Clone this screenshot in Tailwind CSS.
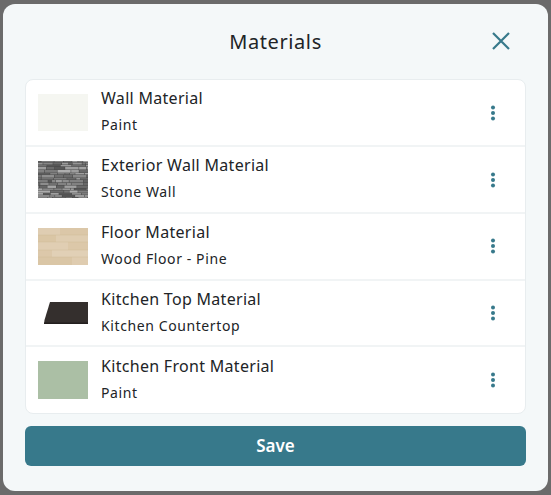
<!DOCTYPE html>
<html lang="en">
<head>
    <meta charset="UTF-8">
    <meta name="viewport" content="width=device-width, initial-scale=1.0">
    <script src="https://cdn.jsdelivr.net/npm/@tailwindcss/browser@4"></script>
    <title>Materials</title>
</head>
<body class="m-0 p-0 bg-[#6b6b6b] font-['Noto_Sans',sans-serif]">
    <div class="w-[551px] h-[495px] overflow-hidden pt-[4px] pl-[3px]">
        <!-- MODAL -->
        <div class="w-[545px] h-[487px] bg-[#f4f8f9] rounded-[12px] px-[22px] flex flex-col">
            <div class="h-[75px] shrink-0 relative flex items-center justify-center">
                <h2 class="text-[20px] text-[#212427] tracking-[0.6px]">Materials</h2>
                <svg class="absolute right-[15px] top-[27px] w-[20px] h-[20px]" viewBox="0 0 20 20" fill="none" stroke="#37798b" stroke-width="2.2"><path d="M2 2 L18 18 M18 2 L2 18"/></svg>
            </div>

            <div class="h-[335px] shrink-0 bg-white border border-[#e8edef] rounded-[8px] flex flex-col overflow-hidden">
                <!-- baris -->
                <div class="h-[67px] shrink-0 flex items-start pl-[12px] border-b-2 border-[#f1f4f5]">
                    <div class="w-[50px] h-[37px] mt-[14px] bg-[#f5f6f1] shrink-0"></div>
                    <div class="ml-[13px] pt-[7px] flex-1 text-[#212427]">
                        <p class="text-[16px] leading-[22px] tracking-[0.3px]">Wall Material</p>
                        <p class="text-[14px] leading-[20px] mt-[6px] tracking-[0.6px]">Paint</p>
                    </div>
                    <svg class="w-[6px] h-[16px] mt-[25px] mr-[29px]" viewBox="0 0 6 16" fill="#37798b"><circle cx="3" cy="2.5" r="2"/><circle cx="3" cy="8" r="2"/><circle cx="3" cy="13.5" r="2"/></svg>
                </div>
                <div class="h-[67px] shrink-0 flex items-start pl-[12px] border-b-2 border-[#f1f4f5]">
                    <svg id="stone" class="w-[50px] h-[37px] mt-[14px] shrink-0" viewBox="0 0 50 37"><rect width="50" height="37" fill="#444444"/></svg>
                    <div class="ml-[13px] pt-[7px] flex-1 text-[#212427]">
                        <p class="text-[16px] leading-[22px] tracking-[0.3px]">Exterior Wall Material</p>
                        <p class="text-[14px] leading-[20px] mt-[6px] tracking-[0.6px]">Stone Wall</p>
                    </div>
                    <svg class="w-[6px] h-[16px] mt-[25px] mr-[29px]" viewBox="0 0 6 16" fill="#37798b"><circle cx="3" cy="2.5" r="2"/><circle cx="3" cy="8" r="2"/><circle cx="3" cy="13.5" r="2"/></svg>
                </div>
                <div class="h-[67px] shrink-0 flex items-start pl-[12px] border-b-2 border-[#f1f4f5]">
                    <svg class="w-[50px] h-[37px] mt-[14px] shrink-0" viewBox="0 0 50 37">
                        <rect width="50" height="37" fill="#dcc8a9"/>
                        <rect y="0" width="22" height="7" fill="#dfcdb2"/><rect x="22" y="0" width="28" height="7" fill="#dbc7a8"/>
                        <rect y="7" width="18" height="7" fill="#dac6a5"/><rect x="18" y="7" width="32" height="7" fill="#dfcdb1"/>
                        <rect y="14" width="30" height="8" fill="#e0ceb3"/><rect x="30" y="14" width="20" height="8" fill="#dcc8a9"/>
                        <rect y="22" width="14" height="7" fill="#dcc8aa"/><rect x="14" y="22" width="36" height="7" fill="#e1d0b6"/>
                        <rect y="29" width="34" height="8" fill="#dac6a6"/><rect x="34" y="29" width="16" height="8" fill="#dfccb0"/>
                        <path d="M0 7H50M0 14H50M0 22H50M0 29H50" stroke="#c8b08b" stroke-width="0.3"/>
                    </svg>
                    <div class="ml-[13px] pt-[7px] flex-1 text-[#212427]">
                        <p class="text-[16px] leading-[22px] tracking-[0.3px]">Floor Material</p>
                        <p class="text-[14px] leading-[20px] mt-[6px] tracking-[0.6px]">Wood Floor - Pine</p>
                    </div>
                    <svg class="w-[6px] h-[16px] mt-[24px] mr-[29px]" viewBox="0 0 6 16" fill="#37798b"><circle cx="3" cy="2.5" r="2"/><circle cx="3" cy="8" r="2"/><circle cx="3" cy="13.5" r="2"/></svg>
                </div>
                <div class="h-[66px] shrink-0 flex items-start pl-[12px] border-b-2 border-[#f1f4f5]">
                    <svg class="w-[50px] h-[37px] mt-[14px] shrink-0" viewBox="0 0 50 37">
                        <path d="M12 7 H50 V29 H6 L6.5 25 Z" fill="#342f2d"/>
                        <path d="M6 27.5 H50 V29 H6 Z" fill="#231f1e"/>
                    </svg>
                    <div class="ml-[13px] pt-[7px] flex-1 text-[#212427]">
                        <p class="text-[16px] leading-[22px] tracking-[0.3px]">Kitchen Top Material</p>
                        <p class="text-[14px] leading-[20px] mt-[6px] tracking-[0.6px]">Kitchen Countertop</p>
                    </div>
                    <svg class="w-[6px] h-[16px] mt-[24px] mr-[29px]" viewBox="0 0 6 16" fill="#37798b"><circle cx="3" cy="2.5" r="2"/><circle cx="3" cy="8" r="2"/><circle cx="3" cy="13.5" r="2"/></svg>
                </div>
                <div class="h-[66px] shrink-0 flex items-start pl-[12px]">
                    <div class="w-[50px] h-[38px] mt-[14px] bg-[#abbfa5] shrink-0"></div>
                    <div class="ml-[13px] pt-[8px] flex-1 text-[#212427]">
                        <p class="text-[16px] leading-[22px] tracking-[0.3px]">Kitchen Front Material</p>
                        <p class="text-[14px] leading-[20px] mt-[6px] tracking-[0.6px]">Paint</p>
                    </div>
                    <svg class="w-[6px] h-[16px] mt-[25px] mr-[29px]" viewBox="0 0 6 16" fill="#37798b"><circle cx="3" cy="2.5" r="2"/><circle cx="3" cy="8" r="2"/><circle cx="3" cy="13.5" r="2"/></svg>
                </div>
            </div>

            <button class="mt-[12px] h-[40px] shrink-0 w-full bg-[#37798b] rounded-[6px] text-white text-[17px] font-semibold">Save</button>
        </div>
    </div>

<script>
    // batu: bata-bata kecil acak, seed tetap
    let seed = 11;
    function rnd() {
        seed = (seed * 16807) % 2147483647;
        return seed / 2147483647;
    }
    const stone = document.getElementById('stone');
    let y = 0;
    while (y < 37) {
        const h = 1.3 + rnd() * 1.5;
        let x = -rnd() * 8;
        while (x < 50) {
            const w = 3 + rnd() * 11;
            const v = Math.floor(85 + rnd() * 90);
            const r = document.createElementNS('http://www.w3.org/2000/svg', 'rect');
            r.setAttribute('x', x);
            r.setAttribute('y', y);
            r.setAttribute('width', w);
            r.setAttribute('height', h);
            r.setAttribute('fill', 'rgb(' + v + ',' + v + ',' + v + ')');
            stone.appendChild(r);
            x += w + 0.5;
        }
        y += h + 0.4;
    }
</script>
</body>
</html>
